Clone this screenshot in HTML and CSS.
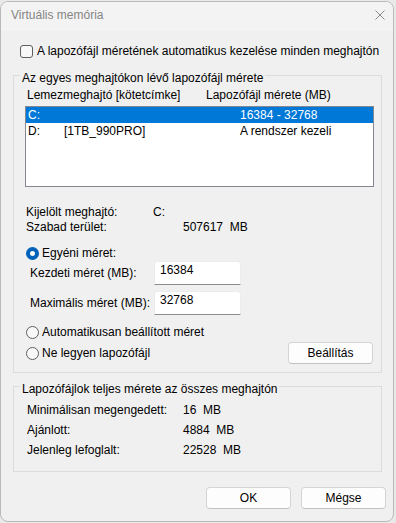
FILE: index.html
```html
<!DOCTYPE html>
<html>
  <head>
    <meta charset="UTF-8" />
    <title>Virtuális memória</title>
    <link rel="stylesheet" href="styles.css">
  </head>
  <body>
    <div class="window">
      <div class="titlebar">
        <span class="title">Virtuális memória</span>
        <svg class="close" width="10" height="10" viewBox="0 0 10 10">
          <path d="M0.5 0.5 L9.5 9.5 M9.5 0.5 L0.5 9.5" stroke="#8a8a8a" stroke-width="1" fill="none" />
        </svg>
      </div>
      <div class="content">
        <div class="check-row"><span class="checkbox"></span>A lapozófájl méretének automatikus kezelése minden meghajtón</div>

        <fieldset class="group drives">
          <legend>Az egyes meghajtókon lévő lapozófájl mérete</legend>
          <div class="list-head">
            <span class="head-drive">Lemezmeghajtó [kötetcímke]</span>
            <span>Lapozófájl mérete (MB)</span>
          </div>
          <div class="listbox">
            <div class="list-row selected"><span class="col-letter">C:</span><span class="col-label"></span><span>16384 - 32768</span></div>
            <div class="list-row"><span class="col-letter">D:</span><span class="col-label">[1TB_990PRO]</span><span>A rendszer kezeli</span></div>
          </div>
          <div class="info">
            <div class="info-row"><span class="key-drive">Kijelölt meghajtó:</span><span>C:</span></div>
            <div class="info-row"><span class="key-free">Szabad terület:</span><span class="val">507617  MB</span></div>
          </div>
          <div class="radio-row custom"><span class="radio on"></span>Egyéni méret:</div>
          <div class="edit-row"><span class="edit-label">Kezdeti méret (MB):</span><div class="edit">16384</div></div>
          <div class="edit-row second"><span class="edit-label">Maximális méret (MB):</span><div class="edit">32768</div></div>
          <div class="radio-row auto"><span class="radio"></span>Automatikusan beállított méret</div>
          <div class="radio-row none">
            <span class="radio-label"><span class="radio"></span>Ne legyen lapozófájl</span>
            <button class="btn set">Beállítás</button>
          </div>
        </fieldset>

        <fieldset class="group totals">
          <legend>Lapozófájlok teljes mérete az összes meghajtón</legend>
          <div class="total-row"><span class="total-key">Minimálisan megengedett:</span><span class="val">16  MB</span></div>
          <div class="total-row"><span class="total-key">Ajánlott:</span><span class="val">4884  MB</span></div>
          <div class="total-row"><span class="total-key">Jelenleg lefoglalt:</span><span class="val">22528  MB</span></div>
        </fieldset>

        <div class="buttons">
          <button class="btn">OK</button>
          <button class="btn">Mégse</button>
        </div>
      </div>
    </div>
  </body>
</html>
```

FILE: styles.css
```css
html, body {
  margin: 0; padding: 0; overflow: hidden;
  width: 100%; height: 100%;
}
body {
  background-color: #e9e9e9;
  font-family: "Liberation Sans", Arial, sans-serif;
  font-size: 12px; color: #000;
}
.window {
  box-sizing: border-box; margin-top: 1px;
  width: 394px; height: 521px;
  border: 1px solid #b9b9b9; border-radius: 8px;
  background-color: #f0f0f0; overflow: hidden;
}
.titlebar {
  display: flex; align-items: flex-start;
  height: 29px; box-sizing: border-box;
  padding: 5px 0 0 10px;
  background-color: #f3f3f3;
}
.title { line-height: 16px; color: #858585; }
.close { margin: 3px 8px 0 auto; }
.content { padding: 0 11px 0 12px; }
.check-row {
  display: flex; align-items: center;
  margin-top: 12px; padding-left: 7px;
  height: 16px; line-height: 16px;
}
.checkbox {
  box-sizing: border-box; width: 13px; height: 13px;
  border: 1px solid #5f5f5f; border-radius: 3px;
  background-color: #f8f8f8; margin-right: 4px;
}

.group {
  margin: 0; min-width: 0;
  border: 1px solid #dcdcdc;
}
.group > legend {
  margin-left: -5px; padding: 5px 2px 0;
  line-height: 10px;
}
.drives { margin-top: 9px; padding: 4px 7px 8px 11px; }
.totals { margin-top: 6px; padding: 6px 7px 11px 11px; }

.list-head { display: flex; padding-left: 2px; line-height: 16px; }
.head-drive { width: 179px; }
.listbox {
  box-sizing: border-box; height: 81px; margin-top: 3px;
  border: 1px solid #828790; background-color: #fff;
}
.list-row { display: flex; height: 16px; line-height: 16px; padding-left: 2px; }
.list-row.selected { background-color: #0078d7; color: #fff; }
.col-letter { width: 36px; }
.col-label { width: 176px; }

.info { margin-top: 18px; }
.info-row { display: flex; line-height: 15px; padding-left: 1px; }
.key-drive { width: 127px; }
.key-free { width: 157px; }
.val { white-space: pre; }

.radio-row {
  display: flex; align-items: center;
  line-height: 16px; padding-left: 1px;
}
.radio-row.custom { margin-top: 10px; }
.radio-row.auto { margin-top: 9px; }
.radio-row.none {
  margin-top: 2px; height: 22px;
  justify-content: space-between; padding-right: 1px;
}
.radio-label { display: flex; align-items: center; }
.radio {
  box-sizing: border-box; width: 13px; height: 13px;
  border: 1px solid #5f5f5f; border-radius: 50%;
  background-color: #f8f8f8; margin-right: 3px;
}
.radio.on { border: 4px solid #0062b9; background-color: #fff; }

.edit-row { display: flex; align-items: flex-start; padding-left: 5px; }
.edit-row.second { margin-top: 6px; }
.edit-label { width: 124px; margin-top: 4px; line-height: 16px; }
.edit {
  box-sizing: border-box; width: 87px; height: 24px;
  padding-left: 5px; line-height: 16px;
  background-color: #fff; border: 1px solid #ececec;
  border-bottom-color: #8c8c8c; border-radius: 3px 3px 0 0;
}

.total-row { display: flex; line-height: 20px; padding-left: 2px; }
.total-key { width: 156px; }

.btn {
  box-sizing: border-box; width: 85px; height: 22px;
  padding: 0; margin: 0;
  font-family: inherit; font-size: 12px; line-height: 16px; color: #000;
  background-color: #fdfdfd;
  border: 1px solid #d4d4d4; border-bottom-color: #c2c2c2;
  border-radius: 4px;
}
.buttons {
  display: flex; justify-content: flex-end; gap: 10px;
  margin: 15px -4px 0 0;
}
```
